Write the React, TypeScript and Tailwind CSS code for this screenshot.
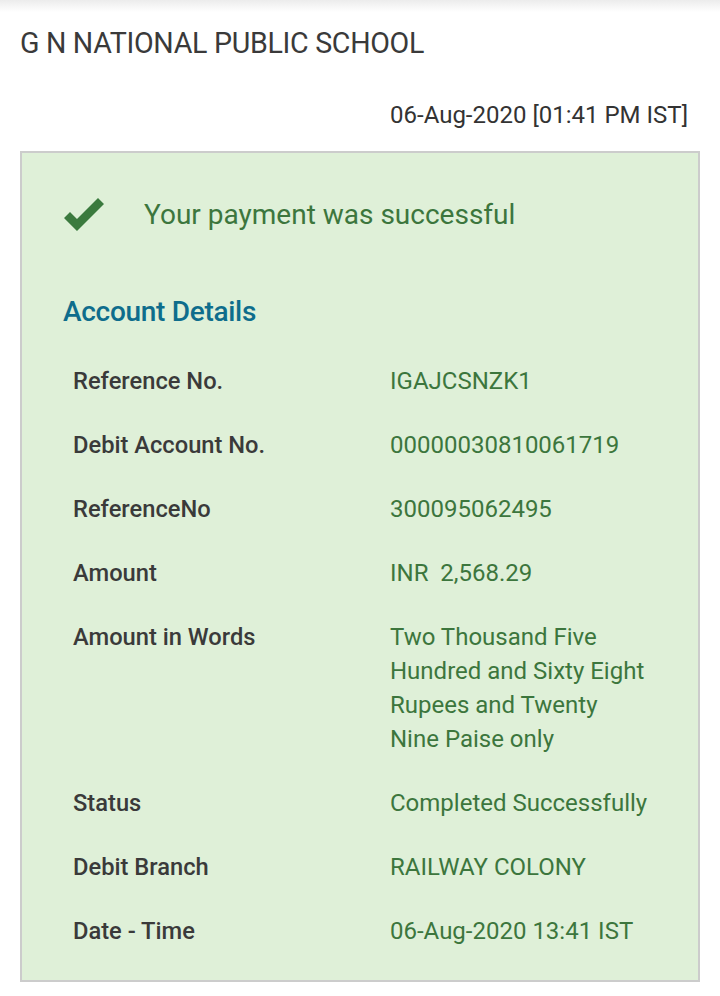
import React from "react";

const rows: { label: string; value: string }[] = [
  { label: "Reference No.", value: "IGAJCSNZK1" },
  { label: "Debit Account No.", value: "00000030810061719" },
  { label: "ReferenceNo", value: "300095062495" },
  { label: "Amount", value: "INR\u00a0 2,568.29" },
  {
    label: "Amount in Words",
    value: "Two Thousand Five Hundred and Sixty Eight Rupees and Twenty Nine Paise only",
  },
  { label: "Status", value: "Completed Successfully" },
  { label: "Debit Branch", value: "RAILWAY COLONY" },
  { label: "Date - Time", value: "06-Aug-2020 13:41 IST" },
];

export default function App() {
  return (
    <div
      className="w-[720px] h-[996px] bg-white relative overflow-hidden"
      style={{ fontFamily: "Roboto, 'Liberation Sans', sans-serif" }}
    >
      <div className="absolute top-0 left-0 right-0 h-[12px] bg-gradient-to-b from-[#ececec] to-white" />
      <div className="pt-[27px] px-[20px]">
        <h1 className="text-[28.6px] leading-[32px] text-[#3a3a3a] font-normal tracking-[-0.3px]">
          G N NATIONAL PUBLIC SCHOOL
        </h1>
        <div className="mt-[42px] text-right pr-[12px] text-[24px] leading-[28px] text-[#333]">
          06-Aug-2020 [01:41 PM IST]
        </div>
        <div className="mt-[22px] w-[680px] border-2 border-[#cccccc] bg-[#dff0d8] px-[41px] pt-[45px] pb-[17px]">
          <div className="flex items-center">
            <svg width="42" height="34" viewBox="0 0 42 34" className="shrink-0">
              <path d="M1 20 L7 14 L14 21 L35 0 L41 6 L14 33 Z" fill="#3b7a3e" />
            </svg>
            <div className="ml-[39px] text-[28px] leading-[30px] text-[#3c763d]">
              Your payment was successful
            </div>
          </div>
          <div className="mt-[65px] text-[28px] leading-[30px] font-medium text-[#0e6d8c] tracking-[-0.3px]">
            Account Details
          </div>
          <table className="mt-[22px] w-[596px] border-collapse table-fixed">
            <colgroup>
              <col className="w-[317px]" />
              <col className="w-[279px]" />
            </colgroup>
            <tbody>
              {rows.map((r) => (
                <tr key={r.label}>
                  <td className="align-top px-[10px] py-[15px] text-[23.7px] leading-[34px] font-medium text-[#3a3a3a]">
                    {r.label}
                  </td>
                  <td className="align-top px-[10px] py-[15px] text-[24px] leading-[34px] text-[#3c763d]">
                    {r.value}
                  </td>
                </tr>
              ))}
            </tbody>
          </table>
        </div>
      </div>
    </div>
  );
}
